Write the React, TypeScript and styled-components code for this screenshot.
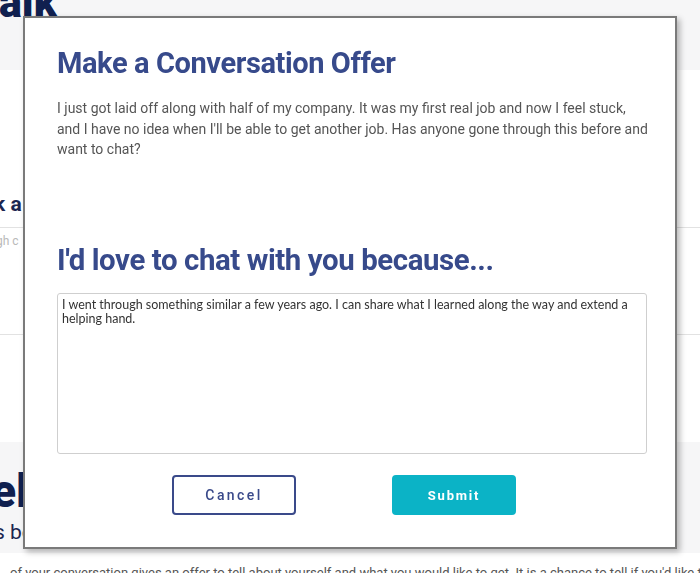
import React from "react";
import styled, { createGlobalStyle } from "styled-components";

const Global = createGlobalStyle`
  html, body { margin: 0; padding: 0; background: #ffffff; overflow: hidden; }
  body { font-family: "Roboto", "Noto Sans", sans-serif; }
  * { box-sizing: border-box; }
`;

const Page = styled.div`
  width: 700px;
  height: 573px;
  display: flex;
  flex-direction: column;
  overflow: hidden;
`;

const HeaderBand = styled.header`
  height: 70px;
  flex-shrink: 0;
  background: #f6f6f7;
  overflow: hidden;
`;

const HeaderTitle = styled.div`
  font-family: "Roboto", sans-serif;
  font-weight: 900;
  font-size: 43px;
  line-height: 43px;
  color: #10204f;
  margin-top: -19px;
  margin-left: -1px;
`;

const Middle = styled.section`
  height: 372px;
  flex-shrink: 0;
  display: flex;
  flex-direction: column;
  padding-top: 122px;
`;

const SideTitle = styled.div`
  font-family: "Roboto", sans-serif;
  font-weight: 700;
  font-size: 21px;
  line-height: 24px;
  color: #1b2650;
  margin-left: -6px;
  padding-bottom: 11px;
  border-bottom: 1px solid #e2e2e2;
`;

const SideHint = styled.div`
  font-family: "Roboto", sans-serif;
  font-size: 12px;
  color: #b9b9b9;
  margin-left: -4px;
  padding-top: 6px;
  height: 107px;
  border-bottom: 1px solid #e2e2e2;
`;

const LowerBand = styled.section`
  height: 111px;
  flex-shrink: 0;
  background: #f6f6f7;
  padding-top: 26px;
  overflow: hidden;
`;

const LowerTitle = styled.div`
  font-family: "Roboto", sans-serif;
  font-weight: 900;
  font-size: 46px;
  line-height: 46px;
  color: #10204f;
  margin-left: -9px;
`;

const LowerSub = styled.div`
  font-family: "Roboto", sans-serif;
  font-size: 21px;
  line-height: 24px;
  color: #1b2650;
  margin-top: 6px;
  margin-left: -6px;
`;

const FooterText = styled.div`
  font-family: "Roboto", sans-serif;
  font-size: 13px;
  color: #555;
  padding-top: 12px;
  padding-left: 10px;
  white-space: nowrap;
`;

const Modal = styled.div`
  position: fixed;
  left: 23px;
  top: 16px;
  width: 654px;
  height: 533px;
  background: #ffffff;
  border: 2px solid #7a7a7a;
  box-shadow: 3px 3px 6px rgba(0, 0, 0, 0.28);
  padding: 28px 29px 0 32px;
  display: flex;
  flex-direction: column;
`;

const Heading = styled.h1<{ $size: number }>`
  margin: 0;
  font-family: "Roboto", sans-serif;
  font-weight: 700;
  font-size: ${(p) => p.$size}px;
  letter-spacing: -0.4px;
  color: #374a8b;
`;

const Offer = styled.p`
  margin: 18px -16px 0 0;
  font-family: "Roboto", sans-serif;
  font-size: 14px;
  line-height: 20.5px;
  color: #555555;
  height: 145px;
`;

const Answer = styled.textarea`
  margin-top: 16px;
  width: 590px;
  height: 161px;
  border: 1px solid #cfcfcf;
  border-radius: 3px;
  padding: 4px 4px;
  font-family: "Lato", sans-serif;
  font-size: 12.5px;
  line-height: 14px;
  color: #333333;
  resize: none;
  outline: none;
`;

const Actions = styled.div`
  display: flex;
  gap: 96px;
  margin-top: 21px;
  padding-left: 115px;
`;

const Button = styled.button<{ $primary?: boolean }>`
  width: 124px;
  height: 40px;
  border-radius: 4px;
  font-family: "Roboto", sans-serif;
  letter-spacing: ${(p) => (p.$primary ? "1.8px" : "2.4px")};
  font-weight: ${(p) => (p.$primary ? 700 : 500)};
  cursor: pointer;
  border: 2px solid ${(p) => (p.$primary ? "#0bb3c6" : "#3a4a8a")};
  background: ${(p) => (p.$primary ? "#0bb3c6" : "#ffffff")};
  color: ${(p) => (p.$primary ? "#ffffff" : "#3a4a8a")};
  font-size: ${(p) => (p.$primary ? "13px" : "14px")};
`;

export default function App() {
  return (
    <>
      <Global />
      <Page>
        <HeaderBand>
          <HeaderTitle>alk</HeaderTitle>
        </HeaderBand>
        <Middle>
          <SideTitle>k a</SideTitle>
          <SideHint>gh c</SideHint>
        </Middle>
        <LowerBand>
          <LowerTitle>el</LowerTitle>
          <LowerSub>s be</LowerSub>
        </LowerBand>
        <FooterText>
          of your conversation gives an offer to tell about yourself and what you would like to get. It is a chance to tell if you'd like to hear a story or a conversation
        </FooterText>
      </Page>
      <Modal role="dialog" aria-label="Make a Conversation Offer">
        <Heading $size={29}>Make a Conversation Offer</Heading>
        <Offer>
          I just got laid off along with half of my company. It was my first real job and now I feel stuck,
          <br />
          and I have no idea when I'll be able to get another job. Has anyone gone through this before and
          <br />
          want to chat?
        </Offer>
        <Heading $size={29.4}>I'd love to chat with you because...</Heading>
        <Answer defaultValue="I went through something similar a few years ago. I can share what I learned along the way and extend a helping hand." />
        <Actions>
          <Button>Cancel</Button>
          <Button $primary>Submit</Button>
        </Actions>
      </Modal>
    </>
  );
}
